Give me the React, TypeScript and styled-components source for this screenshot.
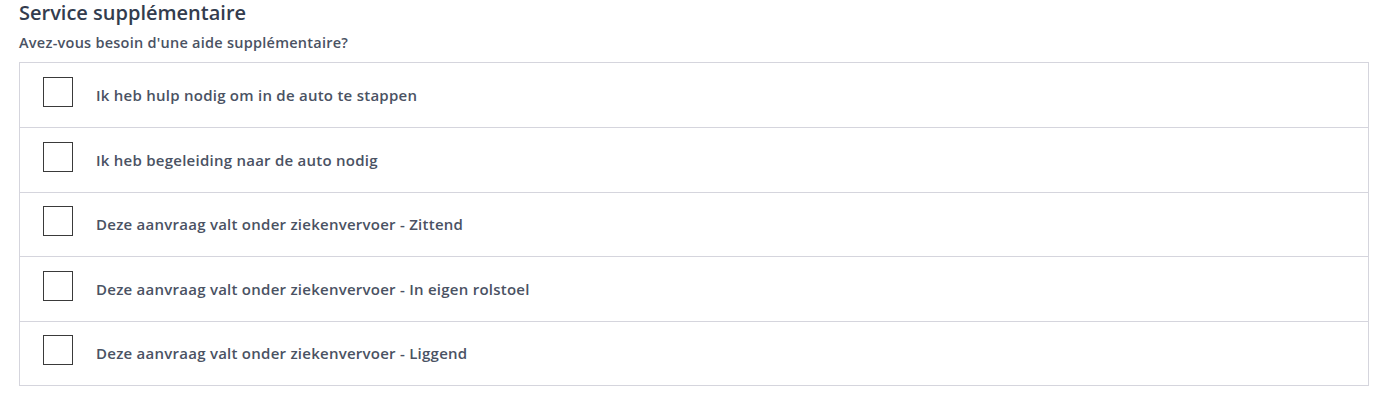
import React from "react";
import styled, { createGlobalStyle } from "styled-components";

const Global = createGlobalStyle`
  html, body { margin: 0; padding: 0; background: #ffffff; }
  body { font-family: "Open Sans", Lato, sans-serif; }
`;

const Page = styled.div`
  padding: 0 18px 0 19px;
`;

const Title = styled.h2`
  margin: 0;
  font-size: 20px;
  line-height: 26px;
  font-weight: 600;
  color: #333c4e;
`;

const Question = styled.p`
  margin: 8px 0 0;
  font-size: 14.5px;
  line-height: 18px;
  font-weight: 600;
  letter-spacing: 0.25px;
  color: #4a5263;
`;

const List = styled.div`
  margin-top: 10px;
  border: 1px solid #d5d5dd;
  display: flex;
  flex-direction: column;
`;

const Row = styled.div`
  display: flex;
  align-items: center;
  gap: 23px;
  height: 63.5px;
  padding-left: 23px;
  border-top: 1px solid #d5d5dd;
  &:first-child { border-top: none; height: 64px; }
  cursor: pointer;
`;

const Box = styled.span`
  width: 28px;
  height: 28px;
  margin-bottom: 6px;
  border: 1px solid #3a3a3a;
  flex: none;
  background: #fff;
`;

const Label = styled.span`
  font-size: 15px;
  font-weight: 600;
  letter-spacing: 0.25px;
  color: #4a5263;
  white-space: nowrap;
`;

const items = [
  "Ik heb hulp nodig om in de auto te stappen",
  "Ik heb begeleiding naar de auto nodig",
  "Deze aanvraag valt onder ziekenvervoer - Zittend",
  "Deze aanvraag valt onder ziekenvervoer - In eigen rolstoel",
  "Deze aanvraag valt onder ziekenvervoer - Liggend",
];

export default function App() {
  return (
    <Page>
      <Global />
      <Title>Service supplémentaire</Title>
      <Question>Avez-vous besoin d'une aide supplémentaire?</Question>
      <List>
        {items.map((t) => (
          <Row key={t}>
            <Box />
            <Label>{t}</Label>
          </Row>
        ))}
      </List>
    </Page>
  );
}
